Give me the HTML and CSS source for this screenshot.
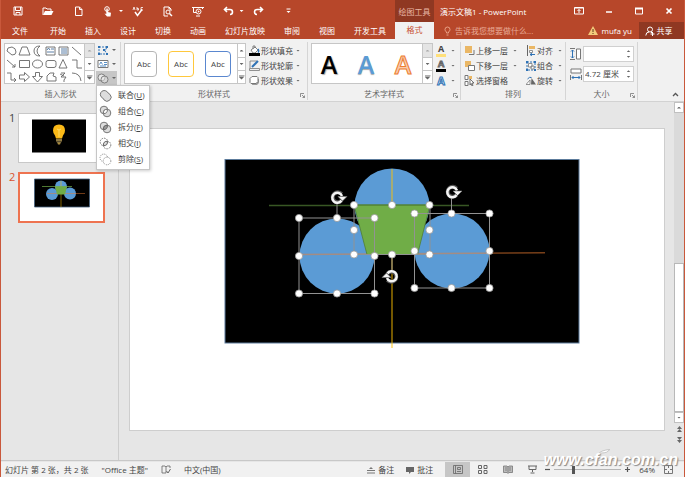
FILE: index.html
```html
<!DOCTYPE html>
<html lang="zh-CN">
<head>
    <meta charset="UTF-8">
    <meta name="viewport" content="width=device-width, initial-scale=1.0">
    <title>演示文稿1 - PowerPoint</title>
    <link rel="stylesheet" href="styles.css">
</head>
<body>
    <header class="header">
        <div class="quick-access">
            <button type="button" aria-label="保存"><svg width="10" height="10" viewBox="0 0 10 10"><path d="M1 1h8v8H1zM2.500 1v3.500h5V1M3 9V6.500h4V9" fill="none" stroke="#fff"/></svg></button>
            <button type="button" aria-label="打开"><svg width="12" height="10" viewBox="0 0 12 10"><path d="M1 9V2h3l1 1h4v2" fill="none" stroke="#fff"/><path d="M1 9l2-4h8.500L9.500 9z" fill="#fff"/></svg></button>
            <button type="button" aria-label="新建"><svg width="9" height="10" viewBox="0 0 9 10"><path d="M1.500 1h4l2.500 2.500V9.500H1.500zM5.500 1v2.500H8" fill="none" stroke="#fff"/></svg></button>
            <button type="button" aria-label="触摸模式" class="has-caret"><svg width="10" height="11" viewBox="0 0 10 11"><circle cx="4" cy="3" r="2.300" fill="none" stroke="#fff"/><path d="M3.300 2.500h1.500V6L8 6.800 7.500 10.500H4L1.500 7.500l1.800.5z" fill="#fff"/></svg><i class="caret"></i></button>
            <button type="button" aria-label="拼写检查"><svg width="12" height="11" viewBox="0 0 12 11"><path d="M1 4l1-3 1 3M5 1v3h1.500V2.500H5M11 1.500H9V4h2" fill="none" stroke="#fff" stroke-width=".8"/><path d="M3 6l2.500 3.500L10 3.500" fill="none" stroke="#fff" stroke-width="1.500"/></svg></button>
            <button type="button" aria-label="打印预览"><svg width="10" height="11" viewBox="0 0 10 11"><path d="M5 10H1V1h5l2 2v2M6 1v2h2" fill="none" stroke="#fff"/><circle cx="5" cy="6" r="2" fill="none" stroke="#fff"/><path d="M6.500 7.500L9 10" stroke="#fff" stroke-width="1.500"/></svg></button>
            <button type="button" aria-label="从头开始"><svg width="12" height="11" viewBox="0 0 12 11"><path d="M0 1.500h12M1.500 1.500v5H4M10.500 1.500V3M4 10h4" fill="none" stroke="#fff"/><circle cx="6.500" cy="5.500" r="2.500" fill="none" stroke="#fff"/><path d="M5.800 4.300v2.400l2-1.200z" fill="#fff"/></svg></button>
            <button type="button" aria-label="撤消" class="has-caret"><svg width="11" height="10" viewBox="0 0 11 10"><path d="M4 1L1.500 3.500 4 6M1.500 3.500H7q2.500 0 2.500 2.500T7 8.500" fill="none" stroke="#fff" stroke-width="1.600"/></svg><i class="caret"></i></button>
            <button type="button" aria-label="恢复"><svg width="11" height="10" viewBox="0 0 11 10"><path d="M7 1l2.500 2.500L7 6M9.500 3.500H4Q1.500 3.500 1.500 6T4 8.500" fill="none" stroke="#fff" stroke-width="1.600"/></svg></button>
            <button type="button" aria-label="自定义快速访问工具栏"><svg width="5" height="6" viewBox="0 0 5 6"><path d="M.5 1h4" stroke="#fff"/><path d="M.5 3h4l-2 2z" fill="#fff"/></svg></button>
        </div>
        <div class="context-title">绘图工具</div>
        <div class="title-row">
            <h1>演示文稿1 - PowerPoint</h1>
            <div class="window-buttons">
                <button type="button" aria-label="功能区显示选项"><svg width="10" height="8" viewBox="0 0 10 8"><path d="M.5.5h9v6.500h-9z" fill="none" stroke="#fff"/><path d="M.5 1h9M5 2.500v3.500M3.500 4L5 2.500 6.500 4" fill="none" stroke="#fff"/></svg></button>
                <button type="button" aria-label="最小化"><svg width="8" height="8" viewBox="0 0 8 8"><path d="M1 5h6" stroke="#fff" stroke-width="1.500"/></svg></button>
                <button type="button" aria-label="最大化"><svg width="8" height="8" viewBox="0 0 8 8"><path d="M.5 1v6h7V1" fill="none" stroke="#fff"/><path d="M0 1.500h8" stroke="#fff" stroke-width="2"/></svg></button>
                <button type="button" aria-label="关闭"><svg width="8" height="8" viewBox="0 0 8 8"><path d="M1.500 1.500l5 5M6.500 1.500l-5 5" stroke="#fff" stroke-width="1.700"/></svg></button>
            </div>
        </div>
        <nav class="tabs">
            <a href="#file" class="file-tab">文件</a>
            <a href="#home">开始</a>
            <a href="#insert">插入</a>
            <a href="#design">设计</a>
            <a href="#transitions">切换</a>
            <a href="#animations">动画</a>
            <a href="#slideshow">幻灯片放映</a>
            <a href="#review">审阅</a>
            <a href="#view">视图</a>
            <a href="#developer">开发工具</a>
        </nav>
        <a href="#format" class="active-tab">格式</a>
        <div class="account-row">
            <label class="tell-me">
                <svg width="7" height="10" viewBox="0 0 7 10"><path d="M2.500 7V6Q1 5 1 3.500a2.500 2.500 0 0 1 5 0Q6 5 4.500 6v1zM2.500 9h2" fill="none" stroke="#eda98f" stroke-width=".9"/></svg>
                <input type="text" placeholder="告诉我您想要做什么..." aria-label="告诉我您想要做什么">
            </label>
            <a href="#account" class="user"><svg width="10" height="9" viewBox="0 0 10 9"><path d="M5 0l5 9H0z" fill="#f3cb7c"/><path d="M5 3v3M5 7v1" stroke="#5c3418"/></svg>mufa yu</a>
            <button type="button" class="share"><svg width="10" height="10" viewBox="0 0 10 10"><circle cx="5" cy="3.500" r="2.500" fill="none" stroke="#fff"/><path d="M.8 9.500Q1 6 4 6M6 6l1 1M5.500 8h4M7.500 6v4" fill="none" stroke="#fff"/></svg>共享</button>
        </div>
    </header>

    <section class="ribbon">
        <div class="group shapes-group">
            <div class="group-body">
                <div class="gallery">
                    <svg class="shapes" width="79" height="39" viewBox="0 0 79 39" fill="none" stroke="#666" stroke-width=".9">
                        <path d="M3 4l4-1q4 1 4 5 0 3-4 3L2 7z"/><path d="M17 3h5l3 8H14z"/><path d="M35 2q-6 0-6 5t6 5q-3-2-3-5t3-5z"/>
                        <path d="M41 3h9v8h-9z"/><path d="M42 6l1.500-2L45 6M46 5h3M42 8h7" stroke="#48709d"/><path d="M54 3h9v8h-9z"/><path d="M57 4v6M59 4v6M61 4v6" stroke="#48709d"/><path d="M67 3l9 8"/>
                        <path d="M2 16l8 7M7 23h3v-3"/><path d="M14.500 16.500h10v7h-10z"/><ellipse cx="32.500" cy="20" rx="5" ry="4"/><rect x="41" y="16.500" width="10" height="7" rx="2"/><path d="M58 15.500l4 8.500h-8z"/><path d="M67 16h5v8h5"/>
                        <path d="M2 29h4v7h5M9 34l2 2-2 2"/><path d="M14.500 31h5v-2.500l5 4.500-5 4.500V35h-5z"/><path d="M30.500 28.500h4v4h3L32.500 38l-5-5.500h3z"/><path d="M42 37v-5l3-3h4l-1 3 3 1v4z"/><path d="M56 29h4l-4 4h5l-2 3M55 30l4 2M58 37l2 0"/><path d="M67 29q8 0 9 8"/>
                    </svg>
                    <div class="scroller"><button type="button" aria-label="上一行" disabled><i class="caret up"></i></button><button type="button" aria-label="下一行"><i class="caret"></i></button><button type="button" aria-label="其他形状"><i class="caret more"></i></button></div>
                </div>
                <div class="edit-tools">
                    <button type="button" aria-label="编辑形状"><svg width="12" height="11" viewBox="0 0 12 11"><path d="M2 2h8L8 6l2 3H2z" fill="none" stroke="#2f72b5" stroke-dasharray="2 1"/><path d="M1 1h2v2H1zM9 1h2v2H9zM1 8h2v2H1zM9 8h2v2H9zM6 4h2v2H6z" fill="#2f72b5"/></svg><i class="caret"></i></button>
                    <button type="button" aria-label="文本框"><svg width="12" height="10" viewBox="0 0 12 10"><path d="M1 1.500h10v7H1z" fill="#fff" stroke="#777"/><path d="M2.500 5.500L4 3l1.500 2.500M7 3.500h3M7 5.500h3M3 7h6" fill="none" stroke="#2f72b5" stroke-width=".8"/></svg><i class="caret"></i></button>
                    <button type="button" class="pressed" aria-label="合并形状" aria-expanded="true"><svg width="12" height="11" viewBox="0 0 12 11" fill="#e8e8e8" stroke="#777" stroke-width=".9"><circle cx="4.500" cy="4.500" r="3.500"/><circle cx="7.500" cy="6.500" r="3.500" fill-opacity=".5"/></svg><i class="caret"></i></button>
                    <ul class="merge-menu">
                        <li><button type="button"><svg width="13" height="13" viewBox="0 0 13 13"><path d="M5 1.500a4 4 0 0 0-3 6.200q2 1 3 3.200a4 4 0 0 0 6-5.500Q9 4.500 8.500 3 7 1.500 5 1.500z" fill="#ddd" stroke="#777"/></svg><span>联合(<u>U</u>)</span></button></li>
                        <li><button type="button"><svg width="13" height="13" viewBox="0 0 13 13"><circle cx="5" cy="5" r="3.800" fill="#ddd" stroke="#777"/><circle cx="8" cy="8" r="3.800" fill="#ddd" stroke="#777"/><path d="M8.500 4.300Q4.500 4 4.300 8.500 8.500 9 8.500 4.300z" fill="#fff" stroke="#777"/></svg><span>组合(<u>C</u>)</span></button></li>
                        <li><button type="button"><svg width="13" height="13" viewBox="0 0 13 13"><circle cx="5" cy="5" r="3.800" fill="#ddd" stroke="#777"/><circle cx="8" cy="8" r="3.800" fill="#ddd" stroke="#777"/><path d="M8.500 4.300Q4.500 4 4.300 8.500 8.500 9 8.500 4.300z" fill="#999" stroke="#666"/></svg><span>拆分(<u>F</u>)</span></button></li>
                        <li><button type="button"><svg width="13" height="13" viewBox="0 0 13 13"><g fill="none" stroke="#777" stroke-dasharray="1.500 1"><circle cx="5" cy="5" r="3.800"/><circle cx="8" cy="8" r="3.800"/></g><path d="M8.500 4.300Q4.500 4 4.300 8.500 8.500 9 8.500 4.300z" fill="#ddd" stroke="#666"/></svg><span>相交(<u>I</u>)</span></button></li>
                        <li><button type="button"><svg width="13" height="13" viewBox="0 0 13 13" fill="none" stroke="#888" stroke-dasharray="1 1"><path d="M8.500 4A3.800 3.800 0 1 0 4 8.600"/><circle cx="8" cy="8" r="3.800"/></svg><span>剪除(<u>S</u>)</span></button></li>
                    </ul>
                </div>
            </div>
            <h2>插入形状</h2>
        </div>

        <div class="group styles-group">
            <div class="group-body">
                <div class="gallery">
                    <div class="presets">
                        <button type="button" class="preset gray">Abc</button>
                        <button type="button" class="preset gold">Abc</button>
                        <button type="button" class="preset blue">Abc</button>
                    </div>
                    <div class="scroller"><button type="button" aria-label="上一行"><i class="caret up"></i></button><button type="button" aria-label="下一行"><i class="caret"></i></button><button type="button" aria-label="其他样式"><i class="caret more"></i></button></div>
                </div>
                <div class="commands">
                    <button type="button"><svg width="11" height="11" viewBox="0 0 11 11"><path d="M2 5l4-3 3 3-3 3H4zM4 4V1h2v2" fill="#fff" stroke="#666" stroke-width=".8"/><path d="M9 4q1.500 2 0 3.500" fill="none" stroke="#2f72b5" stroke-width="1.300"/><path d="M0 8h11v3H0z"/></svg>形状填充<i class="caret"></i></button>
                    <button type="button"><svg width="11" height="11" viewBox="0 0 11 11"><path d="M1 1h7M1 1v7" stroke="#777" stroke-width=".8"/><path d="M3 7l6-6" stroke="#2f72b5" stroke-width="2"/><path d="M.5 8.500h10v2H.5z" fill="#eee" stroke="#777" stroke-width=".8"/></svg>形状轮廓<i class="caret"></i></button>
                    <button type="button"><svg width="11" height="11" viewBox="0 0 11 11"><path d="M4 4h6v4L8 10H3z" fill="#999"/><path d="M3 1.500h5l1 1v4l-2 2H2l-1-1v-4z" fill="#fff" stroke="#777"/></svg>形状效果<i class="caret"></i></button>
                </div>
            </div>
            <h2>形状样式</h2>
            <button type="button" class="launcher" aria-label="设置形状格式"><svg width="5" height="5" viewBox="0 0 5 5"><path d="M.5 4V.5H4M2 2l2.500 2.500M4.500 2.500v2h-2" fill="none" stroke="#777" stroke-width=".8"/></svg></button>
        </div>

        <div class="group wordart-group">
            <div class="group-body">
                <div class="gallery">
                    <div class="presets">
                        <button type="button" class="wordart black">A</button>
                        <button type="button" class="wordart sky">A</button>
                        <button type="button" class="wordart orange">A</button>
                    </div>
                    <div class="scroller"><button type="button" aria-label="上一行" disabled><i class="caret up"></i></button><button type="button" aria-label="下一行"><i class="caret"></i></button><button type="button" aria-label="其他艺术字"><i class="caret more"></i></button></div>
                </div>
                <div class="commands text-commands">
                    <button type="button" aria-label="文本填充"><b class="fill-a">A</b><i class="caret"></i></button>
                    <button type="button" aria-label="文本轮廓"><b class="line-a">A</b><i class="caret"></i></button>
                    <button type="button" aria-label="文本效果"><b class="glow-a">A</b><i class="caret"></i></button>
                </div>
            </div>
            <h2>艺术字样式</h2>
            <button type="button" class="launcher" aria-label="设置文本效果格式"><svg width="5" height="5" viewBox="0 0 5 5"><path d="M.5 4V.5H4M2 2l2.500 2.500M4.500 2.500v2h-2" fill="none" stroke="#777" stroke-width=".8"/></svg></button>
        </div>

        <div class="group arrange-group">
            <div class="group-body">
                <div class="commands">
                    <button type="button"><svg width="11" height="11" viewBox="0 0 11 11"><path d="M5 9.500h5V5" fill="none" stroke="#777"/><path d="M1 1h7v7H1z" fill="#eab765"/></svg>上移一层<i class="caret"></i></button>
                    <button type="button"><svg width="11" height="11" viewBox="0 0 11 11"><path d="M1 1h6v6H1z" fill="#eab765"/><path d="M4.500 5.500h6v5h-6z" fill="#fff" stroke="#777"/></svg>下移一层<i class="caret"></i></button>
                    <button type="button"><svg width="11" height="11" viewBox="0 0 11 11"><path d="M1 .5h3v4H1zM1 6.500h3v4H1z" fill="#fff" stroke="#777"/><path d="M5 1h3v3H5z" fill="#eab765"/><path d="M6 4l4 4H8l1 2.500L8 11 7 8.500 6 10z" fill="#fff" stroke="#555" stroke-width=".8"/></svg>选择窗格</button>
                </div>
                <div class="commands">
                    <button type="button"><svg width="10" height="11" viewBox="0 0 10 11"><path d="M1.500 0v11" stroke="#666"/><path d="M3 1h6v3H3z" fill="#eab765"/><path d="M3.500 5.500h3v2h-3z" fill="#fff" stroke="#777" stroke-width=".8"/><path d="M9 9.500H4M6 8L4 9.500 6 11" fill="none" stroke="#2f72b5"/></svg>对齐<i class="caret"></i></button>
                    <button type="button"><svg width="10" height="10" viewBox="0 0 10 10"><path d="M1 1h8v8H1z" fill="none" stroke="#2f72b5" stroke-dasharray="2 1"/><path d="M2.500 2.500h3.500V6H2.500zM5 5h3v3H5z" fill="#fff" stroke="#777" stroke-width=".8"/><path d="M0 0h2v2H0zM8 0h2v2H8zM0 8h2v2H0zM8 8h2v2H8z" fill="#2f72b5"/></svg>组合<i class="caret"></i></button>
                    <button type="button"><svg width="10" height="10" viewBox="0 0 10 10"><path d="M0 8.500h4L4 4z" fill="#fff" stroke="#777" stroke-width=".8"/><path d="M5 8.500h5L5.500 2z" fill="#666"/><path d="M1.500 3q2-2.500 4-1.500" fill="none" stroke="#2f72b5"/></svg>旋转<i class="caret"></i></button>
                </div>
            </div>
            <h2>排列</h2>
        </div>

        <div class="group size-group">
            <div class="group-body sizes">
                <label><svg width="12" height="12" viewBox="0 0 12 12"><path d="M6.500 1h4v10h-4z" fill="#fff" stroke="#777"/><path d="M0 .5h5M0 11.500h5" stroke="#777"/><path d="M2.500 2v8M1 3.500L2.500 2 4 3.500M1 8.500L2.500 10 4 8.500" fill="none" stroke="#2f72b5"/></svg>
                    <span class="spin"><input type="text" aria-label="高度"><span class="arrows"><i class="caret up"></i><i class="caret"></i></span></span></label>
                <label><svg width="12" height="12" viewBox="0 0 12 12"><path d="M1 1h10v4H1z" fill="#fff" stroke="#777"/><path d="M.5 7v5M11.500 7v5" stroke="#777"/><path d="M2 9.500h8M3.500 8L2 9.500 3.500 11M8.500 8L10 9.500 8.500 11" fill="none" stroke="#2f72b5"/></svg>
                    <span class="spin"><input type="text" value="4.72 厘米" aria-label="宽度"><span class="arrows"><i class="caret up"></i><i class="caret"></i></span></span></label>
            </div>
            <h2>大小</h2>
            <button type="button" class="launcher" aria-label="设置大小和位置"><svg width="5" height="5" viewBox="0 0 5 5"><path d="M.5 4V.5H4M2 2l2.500 2.500M4.500 2.500v2h-2" fill="none" stroke="#777" stroke-width=".8"/></svg></button>
        </div>
        <button type="button" class="collapse" aria-label="折叠功能区"><svg width="7" height="5" viewBox="0 0 7 5"><path d="M1 4l2.500-2.500L6 4" fill="none" stroke="#555" stroke-width="1.300"/></svg></button>
    </section>

    <main class="workspace">
        <aside class="thumbnails">
            <a href="#slide1" class="thumb"><span>1</span>
                <svg viewBox="0 0 85 48">
                    <path d="M13 5.500h54v33H13z"/>
                    <path d="M40 10.500q6 0 6 6 0 3-2 5l-1 3h-6l-1-3q-2-2-2-5 0-6 6-6z" fill="#fbb917"/>
                    <path d="M38 15l2 1 2-1M40 16v7" fill="none" stroke="#fde27c" stroke-width=".8"/>
                    <path d="M37 25h6v2.500h-6zM38 28h4l-1 2.500h-2z" fill="#a98a3c"/>
                    <path d="M37 26h6M37.500 28h5" stroke="#555" stroke-width=".6"/>
                </svg>
            </a>
            <a href="#slide2" class="thumb selected"><span>2</span>
                <svg viewBox="0 0 83 47">
                    <path d="M14.500 5h55v28h-55z" stroke="#45617d" stroke-width=".8"/>
                    <g fill="#5b9bd5"><circle cx="41" cy="12.500" r="6"/><circle cx="32" cy="20" r="6"/><circle cx="50" cy="19.500" r="6"/></g>
                    <path d="M41 7v26" stroke="#ffc000" stroke-opacity=".5"/><path d="M22 12.500h30" stroke="#70ad47" stroke-opacity=".7"/><path d="M27 19.500h38" stroke="#ed7d31" stroke-opacity=".6" stroke-width=".8"/>
                    <path d="M35 12.500h12l-2 8h-8z" fill="#70ad47"/>
                </svg>
            </a>
        </aside>
        <div class="editor">
            <svg class="slide" viewBox="130 129 534 301">
                <defs>
                    <g id="rotate"><path d="M4.500 3.500A5 5 0 1 1 4.500-3" fill="none" stroke="#555" stroke-width="4"/><path d="M4.500 3.500A5 5 0 1 1 5-1" fill="none" stroke="#f5f5f5" stroke-width="2.500"/><path d="M1-.5h9L5.500 4z" fill="#f5f5f5" stroke="#777" stroke-width=".6"/></g>
                </defs>
                <rect x="225" y="159.500" width="354" height="183.500" stroke="#5c7b9b"/>
                <g fill="#5b9bd5"><circle cx="392" cy="206" r="37.500"/><circle cx="337" cy="256" r="37.500"/><circle cx="452" cy="251" r="37.500"/></g>
                <path d="M392 169v179" stroke="#ffc000" stroke-opacity=".45" stroke-width="2"/>
                <path d="M269 205.500h200" stroke="#70ad47" stroke-opacity=".5" stroke-width="1.500"/>
                <path d="M299 254.500L545 252.700" stroke="#ed7d31" stroke-opacity=".5" stroke-width="1.500"/>
                <path d="M354 205h76l-12.500 49.500H367z" fill="#70ad47" stroke="#507e32" stroke-width=".8"/>
                <g fill="none" stroke="#929292"><path d="M299 218h75.500v75.500H299zM337 204v14"/><path d="M414.500 213.500h75v74.500h-75zM451.500 198v15"/><path d="M354 205v49.500h76V205M392 254v16"/></g>
                <path d="M354 205h76" stroke="#507e32"/>
                <g fill="#fff" stroke="#999" stroke-width=".8">
                    <circle cx="299" cy="218" r="3.600"/><circle cx="337" cy="218" r="3.600"/><circle cx="374.500" cy="218" r="3.600"/><circle cx="299" cy="256" r="3.600"/><circle cx="374.500" cy="256" r="3.600"/><circle cx="299" cy="293.500" r="3.600"/><circle cx="337" cy="293.500" r="3.600"/><circle cx="374.500" cy="293.500" r="3.600"/>
                    <circle cx="414.500" cy="213.500" r="3.600"/><circle cx="451.500" cy="213.500" r="3.600"/><circle cx="489.500" cy="213.500" r="3.600"/><circle cx="414.500" cy="251" r="3.600"/><circle cx="489.500" cy="251" r="3.600"/><circle cx="414.500" cy="288" r="3.600"/><circle cx="451.500" cy="288" r="3.600"/><circle cx="489.500" cy="288" r="3.600"/>
                    <circle cx="354" cy="205" r="3.600"/><circle cx="392" cy="205" r="3.600"/><circle cx="429.500" cy="205" r="3.600"/><circle cx="354" cy="230" r="3.600"/><circle cx="429.500" cy="230" r="3.600"/><circle cx="354" cy="254.500" r="3.600"/><circle cx="392" cy="254.500" r="3.600"/><circle cx="429.500" cy="254.500" r="3.600"/>
                </g>
                <use href="#rotate" x="337" y="197"/><use href="#rotate" x="452" y="191.500"/><use href="#rotate" transform="translate(392 277) rotate(180)"/>
            </svg>
        </div>
        <div class="scrollbar">
            <button type="button" aria-label="向上滚动"><i class="caret up"></i></button>
            <div class="track"><div class="handle"></div></div>
            <button type="button" aria-label="向下滚动"><i class="caret"></i></button>
            <button type="button" class="step" aria-label="上一张幻灯片"><svg width="5" height="6" viewBox="0 0 5 6"><path d="M0 3l2.500-3L5 3zM0 6l2.500-3L5 6z" fill="#666"/></svg></button>
            <button type="button" class="step" aria-label="下一张幻灯片"><svg width="5" height="6" viewBox="0 0 5 6"><path d="M0 0h5L2.500 3zM0 3h5L2.500 6z" fill="#666"/></svg></button>
        </div>
    </main>

    <footer class="status">
        <span>幻灯片 第 2 张，共 2 张</span>
        <span>"Office 主题"</span>
        <button type="button" aria-label="拼写检查"><svg width="10" height="9" viewBox="0 0 10 9"><path d="M5 8H1V1h3l1 1 1-1h3v2M5 2v6" fill="none" stroke="#666" stroke-width=".8"/><path d="M5.500 6L7 8l2.500-4" fill="none" stroke="#666"/></svg></button>
        <span>中文(中国)</span>
        <div class="status-right">
            <button type="button" class="note"><svg width="8" height="8" viewBox="0 0 8 8"><path d="M2 3l2-2 2 2z" fill="#777"/><path d="M0 4.500h8M0 7h8" stroke="#777"/></svg>备注</button>
            <button type="button" class="note"><svg width="8" height="8" viewBox="0 0 8 8"><path d="M0 1h8v5H5L3 8V6H0z" fill="#666"/></svg>批注</button>
            <div class="views">
                <button type="button" class="pressed" aria-label="普通视图"><svg width="10" height="9" viewBox="0 0 10 9"><path d="M.5.5h9v8h-9zM2.500.500v8M4.500 2.500h3v2h-3zM4 6.500h4" fill="none" stroke="#666" stroke-width=".8"/></svg></button>
                <button type="button" aria-label="幻灯片浏览"><svg width="10" height="9" viewBox="0 0 10 9"><path d="M.5.500h3v3h-3zM6 .5h3v3H6zM.5 5.500h3v3h-3zM6 5.500h3v3H6z" fill="none" stroke="#666"/></svg></button>
                <button type="button" aria-label="阅读视图"><svg width="10" height="9" viewBox="0 0 10 9"><path d="M.5 1H4l1 1 1-1h3.500v6.500H6l-1 1-1-1H.5z" fill="#bbb" stroke="#777" stroke-width=".8"/><path d="M5 2v6M2 3h2M2 5h2M6 3h2M6 5h2" stroke="#777" stroke-width=".8"/></svg></button>
                <button type="button" aria-label="幻灯片放映"><svg width="9" height="9" viewBox="0 0 9 9"><path d="M0 1h9M1 1v3.500h7V1M4.500 4.500V7M2.500 8h4" fill="none" stroke="#666"/></svg></button>
            </div>
            <button type="button" class="zoom-step" aria-label="缩小"><svg width="5" height="5" viewBox="0 0 5 5"><path d="M0 2.500h5" stroke="#555" stroke-width="1.200"/></svg></button>
            <input type="range" min="0" max="100" value="27" aria-label="缩放">
            <button type="button" class="zoom-step" aria-label="放大"><svg width="5" height="5" viewBox="0 0 5 5"><path d="M0 2.500h5M2.500 0v5" stroke="#555" stroke-width="1.200"/></svg></button>
            <span class="percent">64%</span>
            <button type="button" aria-label="适应窗口"><svg width="9" height="9" viewBox="0 0 9 9"><path d="M.5.500h8v8h-8z" fill="none" stroke="#777"/><path d="M4.500 0v3M4.500 6v3M0 4.500h3M6 4.500h3" stroke="#777"/></svg></button>
        </div>
    </footer>
    <div class="watermark">
        <svg width="14" height="7" viewBox="0 0 14 7"><path d="M1 6.500Q3 2.500 12.500 1.500 11 5 4 5z" fill="#fff" stroke="#aaa" stroke-width=".6"/></svg>
        www.cfan.com.cn
    </div>
</body>
</html>
```
FILE: styles.css
```css
* {
    box-sizing: border-box;
}

body {
    display: flex;
    flex-direction: column;
    min-height: 100vh;
    margin: 0;
    position: relative;
    border: 1px solid #c9583b;
    border-top: none;
    background: #e6e6e6;
    color: #444;
    font-family: "Open Sans", "Noto Sans CJK SC", sans-serif;
    font-size: 8px;
    line-height: 12px;
}

button, input {
    margin: 0;
    padding: 0;
    border: none;
    background: none;
    color: inherit;
    font: inherit;
}

button {
    display: flex;
    align-items: center;
    justify-content: center;
}

a {
    color: inherit;
    text-decoration: none;
}

h1, h2 {
    margin: 0;
    font-size: 8px;
    font-weight: normal;
}

svg {
    display: block;
    flex: none;
}

.caret {
    flex: none;
    width: 4px;
    height: 2px;
    background: #666;
    clip-path: polygon(0 0, 100% 0, 50% 100%);
}

.caret.up {
    clip-path: polygon(50% 0, 100% 100%, 0 100%);
}

.caret.more {
    width: 6px;
    height: 5px;
    clip-path: polygon(0 0, 100% 0, 100% 20%, 0 20%, 0 40%, 100% 40%, 50% 100%, 0 40%);
}

/* title bar and tabs */
.header {
    display: grid;
    grid-template-columns: auto 39px 1fr;
    grid-template-rows: 22px 17px;
    background: #b7472a;
    color: #fff;
}

.quick-access {
    display: flex;
    padding-left: 2px;
}

.quick-access button {
    width: 30px;
}

.quick-access .has-caret {
    gap: 6px;
    padding-left: 10px;
}

.quick-access .caret {
    background: #fff;
}

.context-title {
    padding-top: 6px;
    background: #8f3822;
    color: #e8b5a4;
    text-align: center;
}

.title-row, .account-row {
    display: flex;
    justify-content: space-between;
}

.title-row h1 {
    padding: 6px 0 0 6px;
}

.window-buttons {
    display: flex;
}

.window-buttons button {
    width: 30px;
}

.tabs {
    display: flex;
    align-items: center;
}

.tabs a {
    padding: 0 9px 0 10px;
}

.tabs .file-tab {
    padding: 0 12px 0 11px;
}

.active-tab {
    padding-top: 2px;
    background: #f1f1f1;
    color: #c84e2f;
    text-align: center;
}

.account-row {
    align-items: center;
}

.tell-me {
    display: flex;
    flex: 1;
    align-items: center;
    gap: 4px;
    padding-left: 10px;
}

.tell-me input {
    width: 90px;
}

.tell-me input::placeholder {
    color: #e9ab98;
    opacity: 1;
}

.user {
    display: flex;
    align-items: center;
    gap: 4px;
    margin-right: 7px;
}

.share {
    align-self: stretch;
    gap: 2px;
    width: 45px;
    padding-right: 6px;
    background: #8f3822;
}

/* ribbon */
.ribbon {
    display: flex;
    height: 63px;
    padding: 3px 0 1px 0;
    border-bottom: 1px solid #d2d2d2;
    background: #f1f1f1;
}

.group {
    display: flex;
    flex-direction: column;
    justify-content: space-between;
    position: relative;
    padding: 1px 3px 0;
    border-right: 1px solid #d5d5d5;
}

.group h2 {
    color: #666;
    text-align: center;
}

.group-body {
    display: flex;
    gap: 3px;
}

.gallery {
    display: flex;
    height: 41px;
    border: 1px solid #c6c6c6;
    background: #fff;
}

.presets {
    display: flex;
    flex: 1;
    align-items: center;
    gap: 11px;
    padding: 0 6px;
}

.scroller {
    display: grid;
    grid-template-rows: repeat(3, 1fr);
    width: 10px;
    border-left: 1px solid #c6c6c6;
}

.scroller button + button {
    border-top: 1px solid #c6c6c6;
}

.scroller button:disabled {
    background: #e4e4e4;
}

.scroller button:disabled .caret {
    background: #aaa;
}

.shapes-group .group-body {
    gap: 1px;
}

.edit-tools {
    position: relative;
    width: 21px;
}

.edit-tools > button {
    gap: 3px;
    width: 21px;
    height: 14px;
}

.pressed {
    background: #c6c6c6;
}

.merge-menu {
    position: absolute;
    top: 42px;
    left: 0;
    z-index: 2;
    width: 54px;
    margin: 0;
    padding: 1px 0 2px;
    border: 1px solid #c6c6c6;
    background: #fff;
    box-shadow: 1px 1px 3px rgba(0, 0, 0, 0.2);
    list-style: none;
}

.merge-menu button {
    gap: 6px;
    height: 16px;
    padding-left: 2px;
}

.preset {
    width: 26px;
    height: 26px;
    border: 1px solid;
    border-radius: 4px;
}

.preset.gray {
    border-color: #b5b5b5;
}

.preset.gold {
    border-color: #ffc83d;
}

.preset.blue {
    border-color: #5a87cf;
}

.commands {
    display: flex;
    flex-direction: column;
}

.commands button {
    gap: 1px;
    justify-content: flex-start;
    height: 15px;
    white-space: nowrap;
}

.commands .caret {
    margin-left: 2px;
}

.styles-group {
    width: 187px;
}

.styles-group .gallery, .wordart-group .gallery {
    width: 122px;
}

.wordart-group {
    width: 153px;
}

.wordart-group .presets {
    padding: 0 4px;
}

.wordart {
    width: 26px;
    font-size: 25px;
    font-weight: 600;
    line-height: 26px;
}

.wordart.black {
    color: #000;
    text-shadow: 1px 1px 1px #aaa;
}

.wordart.sky {
    color: #5b9bd5;
    text-shadow: 0 1px 1px #aaa;
}

.wordart.orange {
    color: #f8cbad;
    -webkit-text-stroke: 1px #ed7d31;
}

.text-commands button {
    gap: 3px;
}

.text-commands b {
    width: 10px;
    font-size: 9px;
    line-height: 10px;
    text-align: center;
}

.fill-a {
    border-bottom: 3px solid #ffe07a;
}

.line-a {
    border-bottom: 3px solid #000;
    color: #fff;
    -webkit-text-stroke: 1px #666;
}

.text-commands .glow-a {
    color: #fff;
    font-size: 11px;
    -webkit-text-stroke: 1px #2f72b5;
}

.arrange-group {
    width: 105px;
}

.arrange-group .group-body {
    justify-content: space-between;
}

.arrange-group .commands .caret {
    margin-left: 4px;
}

.size-group {
    width: 72px;
}

.sizes {
    flex-direction: column;
    gap: 4px;
    padding-top: 3px;
}

.sizes label {
    display: flex;
    align-items: center;
    gap: 1px;
    padding-left: 1px;
}

.spin {
    display: flex;
    flex: 1;
    min-width: 0;
    height: 16px;
    border: 1px solid #d0d0d0;
    background: #fff;
}

.spin input {
    flex: 1;
    width: 100%;
    min-width: 0;
    padding-left: 1px;
}

.arrows {
    display: flex;
    flex-direction: column;
    align-items: center;
    justify-content: space-evenly;
    width: 9px;
}

.launcher {
    position: absolute;
    right: 2px;
    bottom: 2px;
}

.collapse {
    align-self: flex-end;
    margin-left: auto;
    padding: 0 5px 3px 0;
}

/* slides */
.workspace {
    display: flex;
    flex: 1;
    border-bottom: 1px solid #c8c8c8;
}

.thumbnails {
    display: flex;
    flex-direction: column;
    gap: 9px;
    width: 118px;
    padding: 11px 13px 0 8px;
    border-right: 1px solid #cdcdcd;
}

.thumb {
    display: flex;
    align-items: flex-start;
    justify-content: space-between;
    font-size: 11px;
    line-height: 9px;
}

.thumb svg {
    width: 87px;
    border: 1px solid #c8c8c8;
    background: #fff;
}

.thumb.selected {
    color: #d9532f;
}

.thumb.selected svg {
    border: 2px solid #ee7350;
}

.editor {
    flex: 1;
    padding: 27px 10px 30px 11px;
}

.slide {
    width: 100%;
    outline: 1px solid #cecece;
    background: #fff;
}

.scrollbar {
    display: flex;
    flex-direction: column;
    width: 10px;
}

.scrollbar button {
    height: 11px;
    border: 1px solid #c0c0c0;
    background: #fff;
}

.track {
    display: flex;
    flex: 1;
    flex-direction: column;
    justify-content: flex-end;
    background: #dadada;
}

.handle {
    height: 50%;
    border: 1px solid #b8b8b8;
    background: #fff;
}

.scrollbar .step {
    height: 11px;
    border: none;
    background: none;
}

.scrollbar .step:last-child {
    margin-bottom: 15px;
}

/* status bar */
.status {
    display: flex;
    align-items: center;
    gap: 13px;
    height: 15px;
    margin-top: 1px;
    padding-left: 4px;
    background: #f1f1f1;
}

.status-right {
    display: flex;
    align-items: center;
    align-self: stretch;
    margin-left: auto;
    padding-right: 11px;
}

.note {
    gap: 3px;
    margin-right: 12px;
}

.views {
    display: flex;
    align-self: stretch;
}

.views button {
    width: 25px;
}

.status input[type="range"] {
    width: 67px;
    height: 10px;
    margin: 0 4px;
    appearance: none;
    background: linear-gradient(#b5b5b5, #b5b5b5) center / 100% 1px no-repeat;
}

.status input[type="range"]::-webkit-slider-thumb {
    appearance: none;
    width: 3px;
    height: 8px;
    background: #555;
}

.percent {
    margin: 0 9px;
}

/* site mark over the lower right corner */
.watermark {
    position: absolute;
    right: 6px;
    bottom: 9px;
    color: #fff;
    font: italic bold 16px/16px "Liberation Sans", sans-serif;
    text-shadow: 1px 1px 1px #888;
    pointer-events: none;
}

.watermark svg {
    margin: 0 0 -3px 54px;
}
```
